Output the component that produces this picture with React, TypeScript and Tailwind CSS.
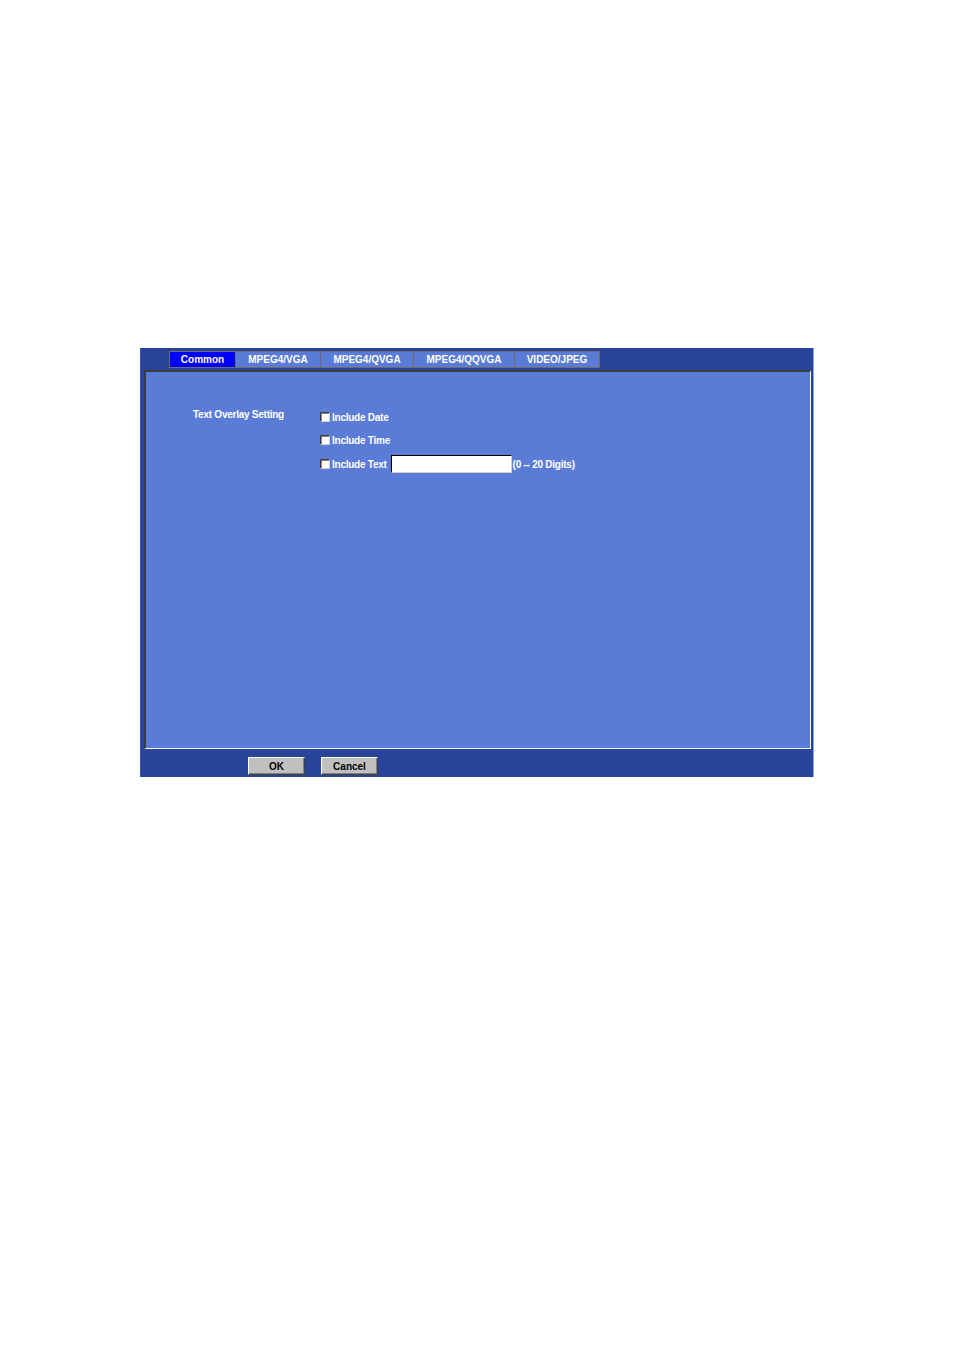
const tabs = ["Common", "MPEG4/VGA", "MPEG4/QVGA", "MPEG4/QQVGA", "VIDEO/JPEG"];
const tabWidths = ["w-[67px]", "w-[85px]", "w-[93px]", "w-[101px]", "w-[85px]"];

function Checkbox() {
    return (
        <span className="inline-block w-[10px] h-[10px] bg-white border-t border-l border-[#404040] border-r border-b border-r-[#d4d0c8] border-b-[#d4d0c8] shadow-[inset_1px_1px_0_#808080]" />
    );
}

function CheckRow({ label, className = "", children }: { label: string; className?: string; children?: React.ReactNode }) {
    return (
        <div className={`flex items-center h-[18px] ${className}`}>
            <Checkbox />
            <span className="ml-[2px]">{label}</span>
            {children}
        </div>
    );
}

function Button({ label }: { label: string }) {
    return (
        <button className="w-[57px] h-[18px] bg-[#c0c0c0] text-black text-[10px] font-bold border border-t-white border-l-white border-r-[#404040] border-b-[#404040] shadow-[inset_-1px_-1px_0_#808080]">
            {label}
        </button>
    );
}

export default function App() {
    return (
        <div className="min-h-[1351px] bg-white pt-[348px] pl-[140px] font-['Liberation_Sans',Arial,sans-serif]">
            <div className="w-[674px] h-[429px] bg-[#27449a] border-l border-l-[#3a58aa] border-r border-r-[#8aa4ee] flex flex-col">
                {/* Tabs */}
                <div className="flex h-[22px] pl-[28px] pt-[3px]">
                    {tabs.map((t, i) => (
                        <div
                            key={t}
                            className={`${tabWidths[i]} h-[17px] flex items-center justify-center text-[10px] font-bold text-white border border-[#6c6c6c] ${
                                i === 0 ? "bg-[#0000ff] border-[#0000ff]" : "bg-[#5b7cd6]"
                            } ${i > 0 ? "border-l-0" : ""}`}
                        >
                            {t}
                        </div>
                    ))}
                </div>

                {/* Panel */}
                <div className="ml-[3px] w-[667px] h-[379px] bg-[#5b7cd6] border-t-2 border-l-2 border-t-[#3c3c3c] border-l-[#3c3c3c] border-r border-b border-r-white border-b-white text-white text-[10px] tracking-[-0.25px] font-bold">
                    <div className="flex pt-[35px] pl-[47px]">
                        <div className="w-[127px]">Text Overlay Setting</div>
                        <div className="flex flex-col gap-[5px] pt-[1px]">
                            <CheckRow label="Include Date" />
                            <CheckRow label="Include Time" />
                            <CheckRow label="Include Text" className="mt-[1px]">
                                <input
                                    type="text"
                                    className="ml-[4px] w-[121px] h-[18px] bg-white border-t border-l border-black border-r border-b border-r-[#d4d0c8] border-b-[#d4d0c8] outline-none"
                                />
                                <span className="ml-[1px]">(0 -- 20 Digits)</span>
                            </CheckRow>
                        </div>
                    </div>
                </div>

                {/* Buttons */}
                <div className="flex gap-[16px] pl-[107px] pt-[8px]">
                    <Button label="OK" />
                    <Button label="Cancel" />
                </div>
            </div>
        </div>
    );
}
